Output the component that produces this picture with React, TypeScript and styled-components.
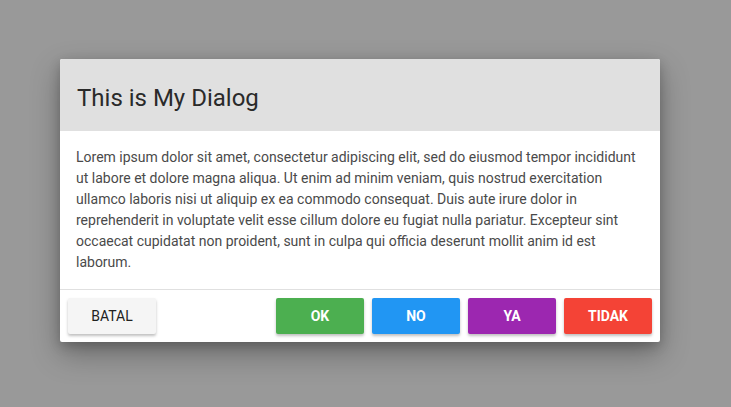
import { createGlobalStyle, styled } from "styled-components";

const GlobalStyle = createGlobalStyle`
  html, body {
    margin: 0;
    padding: 0;
    background: #999999;
    font-family: Roboto, "Liberation Sans", sans-serif;
  }
`;

const Overlay = styled.div`
  width: 731px;
  height: 407px;
  box-sizing: border-box;
  padding: 59px 0 0 60px;
  background: #999999;
`;

const Dialog = styled.div`
  width: 600px;
  background: #ffffff;
  border-radius: 2px;
  overflow: hidden;
  box-shadow: 0 12px 30px rgba(0, 0, 0, 0.3), 0 4px 12px rgba(0, 0, 0, 0.2);
`;

const Header = styled.div`
  height: 72px;
  box-sizing: border-box;
  display: flex;
  align-items: center;
  padding: 6px 17px 0;
  background: #e0e0e0;
`;

const Title = styled.h2`
  margin: 0;
  font-size: 24px;
  font-weight: 400;
  color: #2a2a2a;
`;

const Body = styled.div`
  padding: 16px 16px;
  font-size: 14px;
  line-height: 21px;
  color: #4a4a4a;
`;

const Footer = styled.div`
  display: flex;
  align-items: center;
  gap: 8px;
  padding: 8px;
  border-top: 1px solid #e0e0e0;
`;

const Spacer = styled.div`
  flex: 1;
`;

const Button = styled.button<{ $bg?: string }>`
  width: 88px;
  height: 36px;
  border: none;
  border-radius: 2px;
  font-family: Roboto, "Liberation Sans", sans-serif;
  font-size: 14px;
  font-weight: ${(p) => (p.$bg ? 700 : 400)};
  text-transform: uppercase;
  color: ${(p) => (p.$bg ? "#ffffff" : "#212121")};
  background: ${(p) => p.$bg ?? "#f5f5f5"};
  box-shadow: 0 2px 3px rgba(0, 0, 0, 0.25);
  cursor: pointer;
`;

const actions = [
  { label: "Ok", bg: "#4caf50" },
  { label: "No", bg: "#2196f3" },
  { label: "Ya", bg: "#9c27b0" },
  { label: "Tidak", bg: "#f44336" },
];

export default function App() {
  return (
    <>
      <GlobalStyle />
      <Overlay>
        <Dialog>
          <Header>
            <Title>This is My Dialog</Title>
          </Header>
          <Body>
            Lorem ipsum dolor sit amet, consectetur adipiscing elit, sed do
            eiusmod tempor incididunt ut labore et dolore magna aliqua. Ut enim
            ad minim veniam, quis nostrud exercitation ullamco laboris nisi ut
            aliquip ex ea commodo consequat. Duis aute irure dolor in
            reprehenderit in voluptate velit esse cillum dolore eu fugiat nulla
            pariatur. Excepteur sint occaecat cupidatat non proident, sunt in
            culpa qui officia deserunt mollit anim id est laborum.
          </Body>
          <Footer>
            <Button>Batal</Button>
            <Spacer />
            {actions.map((a) => (
              <Button key={a.label} $bg={a.bg}>
                {a.label}
              </Button>
            ))}
          </Footer>
        </Dialog>
      </Overlay>
    </>
  );
}
